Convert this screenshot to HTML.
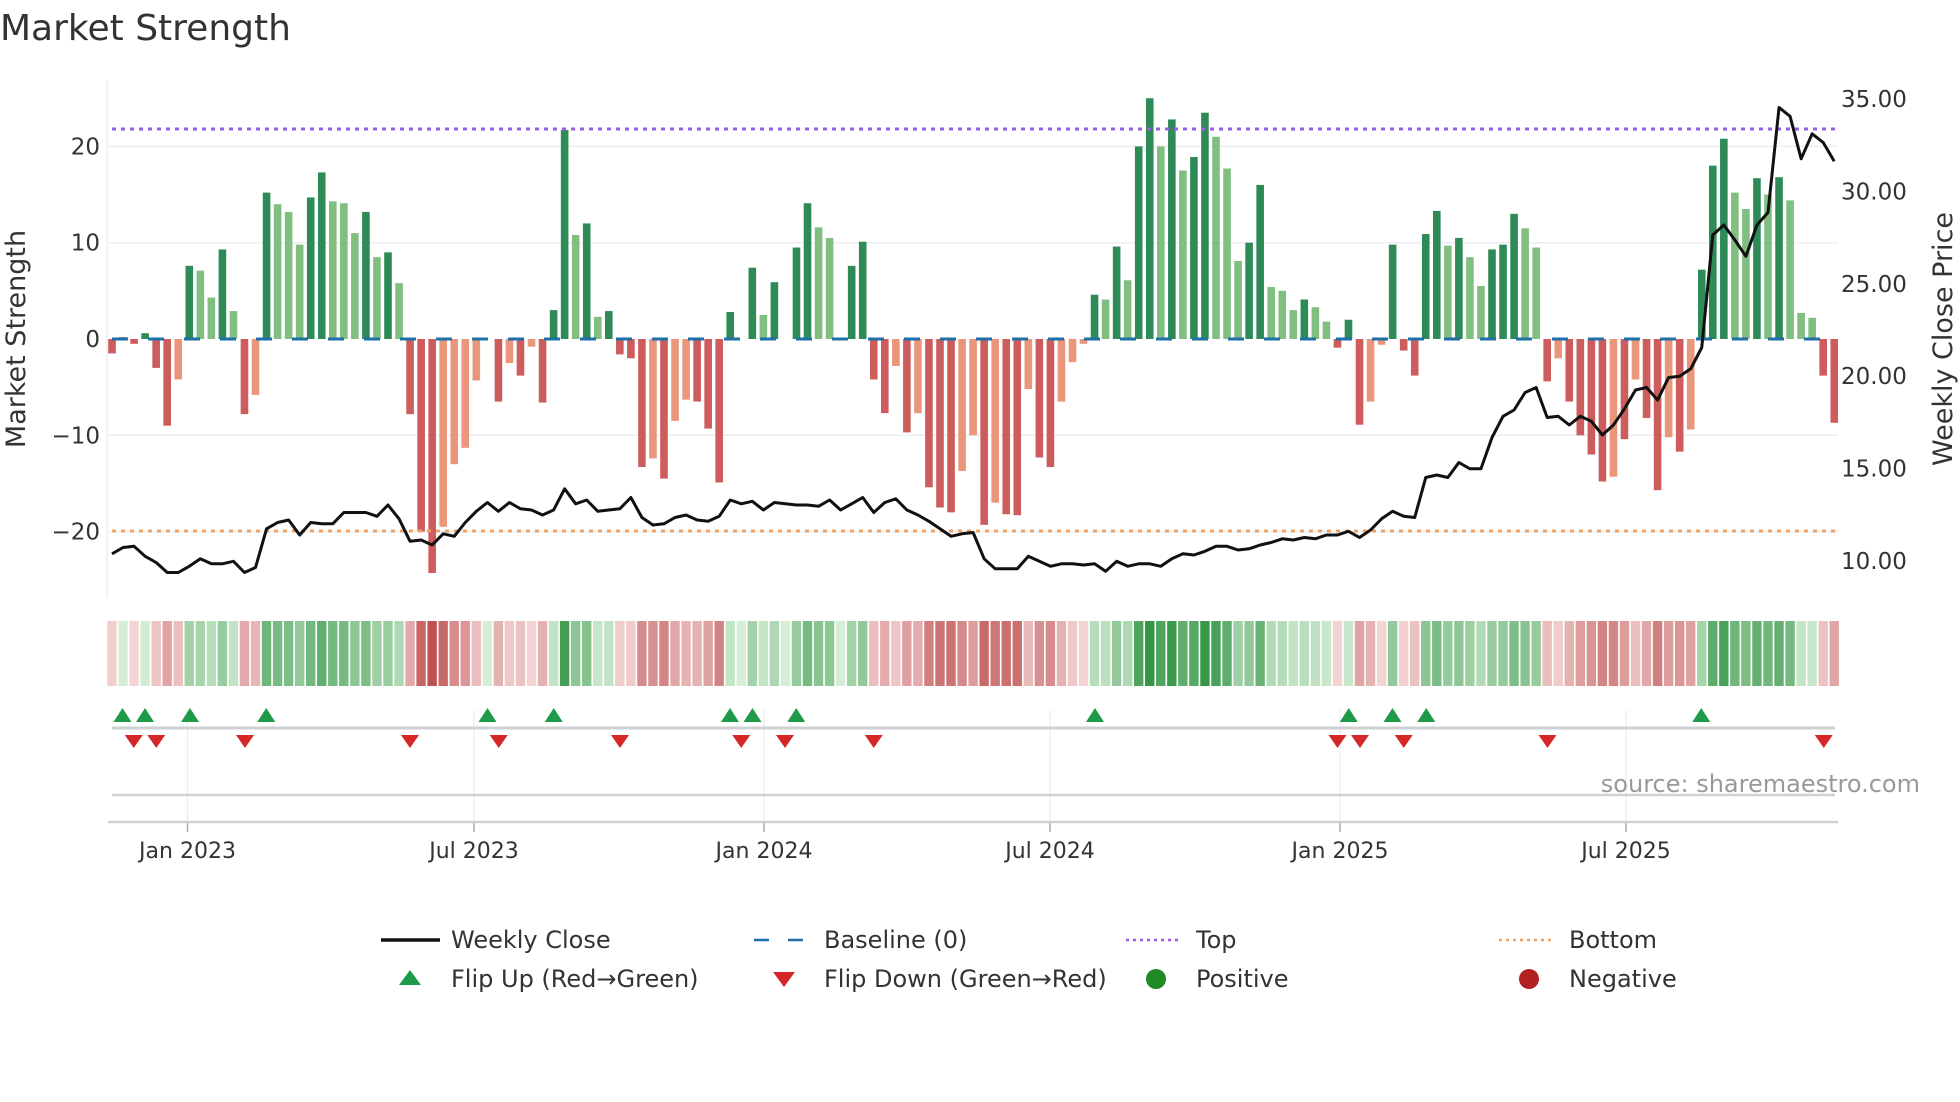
<!DOCTYPE html>
<html><head><meta charset="utf-8">
<style>
html,body{margin:0;padding:0;background:#fff;width:1960px;height:1102px;overflow:hidden}
svg{display:block;font-family:"DejaVu Sans","Liberation Sans",sans-serif}
</style></head>
<body>
<svg id="s" width="1960" height="1102" viewBox="0 0 1960 1102" xmlns="http://www.w3.org/2000/svg">
<text x="0" y="40" font-size="36" fill="#333">Market Strength</text>
<g id="g"></g>
</svg>
<script>
var NS="http://www.w3.org/2000/svg",g=document.getElementById('g');
function el(t,a,txt){var e=document.createElementNS(NS,t);for(var k in a)e.setAttribute(k,a[k]);if(txt!=null)e.textContent=txt;g.appendChild(e);return e;}
var V=[[-1.5,'R'],[0.2,'R'],[-0.5,'R'],[0.6,'D'],[-3,'R'],[-9,'R'],[-4.2,'O'],[7.6,'D'],[7.1,'L'],[4.3,'L'],[9.3,'D'],[2.9,'L'],[-7.8,'R'],[-5.8,'O'],[15.2,'D'],[14,'L'],[13.2,'L'],[9.8,'L'],[14.7,'D'],[17.3,'D'],[14.3,'L'],[14.1,'L'],[11,'L'],[13.2,'D'],[8.5,'L'],[9,'D'],[5.8,'L'],[-7.8,'R'],[-20,'R'],[-24.3,'R'],[-19.5,'O'],[-13,'O'],[-11.3,'O'],[-4.3,'O'],[0,'O'],[-6.5,'R'],[-2.5,'O'],[-3.8,'R'],[-0.8,'O'],[-6.6,'R'],[3,'D'],[21.7,'D'],[10.8,'L'],[12,'D'],[2.3,'L'],[2.9,'D'],[-1.6,'R'],[-2,'R'],[-13.3,'R'],[-12.4,'O'],[-14.5,'R'],[-8.5,'O'],[-6.3,'O'],[-6.5,'R'],[-9.3,'R'],[-14.9,'R'],[2.8,'D'],[0,'D'],[7.4,'D'],[2.5,'L'],[5.9,'D'],[0,'D'],[9.5,'D'],[14.1,'D'],[11.6,'L'],[10.5,'L'],[0,'L'],[7.6,'D'],[10.1,'D'],[-4.2,'R'],[-7.7,'R'],[-2.8,'O'],[-9.7,'R'],[-7.7,'O'],[-15.4,'R'],[-17.5,'R'],[-18,'R'],[-13.7,'O'],[-10,'O'],[-19.3,'R'],[-17,'O'],[-18.2,'R'],[-18.3,'R'],[-5.2,'O'],[-12.3,'R'],[-13.3,'R'],[-6.5,'O'],[-2.4,'O'],[-0.5,'O'],[4.6,'D'],[4.1,'L'],[9.6,'D'],[6.1,'L'],[20,'D'],[25,'D'],[20,'L'],[22.8,'D'],[17.5,'L'],[18.9,'D'],[23.5,'D'],[21,'L'],[17.7,'L'],[8.1,'L'],[10,'D'],[16,'D'],[5.4,'L'],[5,'L'],[3,'L'],[4.1,'D'],[3.3,'L'],[1.8,'L'],[-0.9,'R'],[2,'D'],[-8.9,'R'],[-6.5,'O'],[-0.6,'O'],[9.8,'D'],[-1.2,'R'],[-3.8,'R'],[10.9,'D'],[13.3,'D'],[9.7,'L'],[10.5,'D'],[8.5,'L'],[5.5,'L'],[9.3,'D'],[9.8,'D'],[13,'D'],[11.5,'L'],[9.5,'L'],[-4.4,'R'],[-2,'O'],[-6.5,'R'],[-10,'R'],[-12,'R'],[-14.8,'R'],[-14.3,'O'],[-10.4,'R'],[-4.2,'O'],[-8.2,'R'],[-15.7,'R'],[-10.2,'O'],[-11.7,'R'],[-9.4,'O'],[7.2,'D'],[18,'D'],[20.8,'D'],[15.2,'L'],[13.5,'L'],[16.7,'D'],[15,'L'],[16.8,'D'],[14.4,'L'],[2.7,'L'],[2.2,'L'],[-3.8,'R'],[-8.7,'R']];
var P=[443,438,437,445,450,458,458,453,447,451,451,449,458,454,423,418,416,428,418,419,419,410,410,410,413,404,415,433,432,436,427,429,418,409,402,409,402,407,408,412,408,391,403,400,409,408,407,398,414,420,419,414,412,416,417,413,400,403,401,408,402,403,404,404,405,400,408,403,398,410,402,399,408,412,417,423,429,427,426,447,455,455,455,445,449,453,451,451,452,451,457,449,453,451,451,453,447,443,444,441,437,437,440,439,436,434,431,432,430,431,428,428,425,430,424,415,409,413,414,382,380,382,370,375,375,350,333,328,314,310,334,333,340,333,337,348,340,327,312,310,320,302,301,295,278,188,180,192,205,180,170,86,93,127,107,114,129];
function X(i){return 112+i*11.04}
var Z=339,U=9.63;
var C={D:'#2e8b57',L:'#80bf80',R:'#cd5c5c',O:'#e9967a'};
[20,10,-10,-20].forEach(function(v){el('line',{x1:109,x2:1838,y1:Z-v*U,y2:Z-v*U,stroke:'#eceef4','stroke-width':1.5});});
el('line',{x1:107,x2:107,y1:80,y2:598,stroke:'#eceef4','stroke-width':1.5});
[[20,'20'],[10,'10'],[0,'0'],[-10,'\u221210'],[-20,'\u221220']].forEach(function(a){el('text',{x:100,y:Z-a[0]*U+8,'font-size':23,fill:'#333','text-anchor':'end'},a[1]);});
[35,30,25,20,15,10].forEach(function(p){el('text',{x:1841,y:99+(35-p)*18.48+8,'font-size':23,fill:'#333'},p.toFixed(2));});
el('text',{transform:'translate(25,339) rotate(-90)','font-size':27,fill:'#333','text-anchor':'middle'},'Market Strength');
el('text',{transform:'translate(1952,339) rotate(-90)','font-size':27,fill:'#333','text-anchor':'middle'},'Weekly Close Price');
V.forEach(function(b,i){var v=b[0],h=Math.abs(v)*U;if(h<0.5)return;el('rect',{x:X(i)-3.8,y:v>0?Z-h:Z,width:7.6,height:h,fill:C[b[1]]});});
el('line',{x1:112,x2:1838,y1:Z,y2:Z,stroke:'#1f6fa8','stroke-width':3,'stroke-dasharray':'16 20'});
el('line',{x1:112,x2:1838,y1:129,y2:129,stroke:'#9b5de5','stroke-width':3,'stroke-dasharray':'4 5'});
el('line',{x1:112,x2:1838,y1:531,y2:531,stroke:'#f0a060','stroke-width':3,'stroke-dasharray':'4 5'});
el('polyline',{points:P.map(function(y,i){return X(i)+','+(y*1.25).toFixed(1)}).join(' '),fill:'none',stroke:'#111','stroke-width':3,'stroke-linejoin':'round'});
function mix(a,b,t){return 'rgb('+[0,1,2].map(function(k){return Math.round(a[k]+(b[k]-a[k])*t)}).join(',')+')';}
V.forEach(function(b,i){var v=b[0],t=Math.min(1,Math.abs(v)/24);var c=v>=0?mix([214,238,214],[52,150,70],t):mix([244,214,214],[190,80,80],t);el('rect',{x:X(i)-5.52+0.8,y:621,width:9.4,height:65,fill:c});});
var D=[[187.5,'Jan 2023'],[474,'Jul 2023'],[764,'Jan 2024'],[1050,'Jul 2024'],[1340,'Jan 2025'],[1626,'Jul 2025']];
D.forEach(function(d){el('line',{x1:d[0],x2:d[0],y1:710,y2:822,stroke:'#e8ecef','stroke-width':1.2});el('line',{x1:d[0],x2:d[0],y1:822,y2:832,stroke:'#aaa','stroke-width':1.5});el('text',{x:d[0],y:858,'font-size':22,fill:'#333','text-anchor':'middle'},d[1]);});
el('line',{x1:112,x2:1835,y1:728,y2:728,stroke:'#cfd2d5','stroke-width':3});
el('line',{x1:112,x2:1835,y1:795,y2:795,stroke:'#cfd2d5','stroke-width':2.5});
el('line',{x1:108,x2:1838,y1:822,y2:822,stroke:'#cfd2d5','stroke-width':2.5});
[98,116,152,213,390,443,584,602,637,876,1079,1114,1141,1361].forEach(function(x){x*=1.25;el('polygon',{points:(x-9)+',722 '+(x+9)+',722 '+x+',708',fill:'#1e9a48'});});
[107,125,196,328,399,496,593,628,699,1070,1088,1123,1238,1459].forEach(function(x){x*=1.25;el('polygon',{points:(x-9)+',735 '+(x+9)+',735 '+x+',748',fill:'#d62728'});});
el('text',{x:1920,y:792,'font-size':24,fill:'#999','text-anchor':'end'},'source: sharemaestro.com');
var fs=24,t1=948,t2=987;
el('line',{x1:381,x2:440,y1:940,y2:940,stroke:'#111','stroke-width':3.5});
el('text',{x:451,y:t1,'font-size':fs,fill:'#333'},'Weekly Close');
el('line',{x1:754,x2:806,y1:940,y2:940,stroke:'#1f6fa8','stroke-width':2.5,'stroke-dasharray':'15 19'});
el('text',{x:824,y:t1,'font-size':fs,fill:'#333'},'Baseline (0)');
el('line',{x1:1126,x2:1181,y1:940,y2:940,stroke:'#9b5de5','stroke-width':2.5,'stroke-dasharray':'3 4'});
el('text',{x:1196,y:t1,'font-size':fs,fill:'#333'},'Top');
el('line',{x1:1499,x2:1554,y1:940,y2:940,stroke:'#f0a060','stroke-width':2.5,'stroke-dasharray':'3 4'});
el('text',{x:1569,y:t1,'font-size':fs,fill:'#333'},'Bottom');
el('polygon',{points:'399,985 421,985 410,970',fill:'#1e9a48'});
el('text',{x:451,y:t2,'font-size':fs,fill:'#333'},'Flip Up (Red\u2192Green)');
el('polygon',{points:'773,972 795,972 784,987',fill:'#d62728'});
el('text',{x:824,y:t2,'font-size':fs,fill:'#333'},'Flip Down (Green\u2192Red)');
el('circle',{cx:1156,cy:979,r:10,fill:'#1f8a24'});
el('text',{x:1196,y:t2,'font-size':fs,fill:'#333'},'Positive');
el('circle',{cx:1529,cy:979,r:10,fill:'#b22222'});
el('text',{x:1569,y:t2,'font-size':fs,fill:'#333'},'Negative');
</script>
</body></html>
